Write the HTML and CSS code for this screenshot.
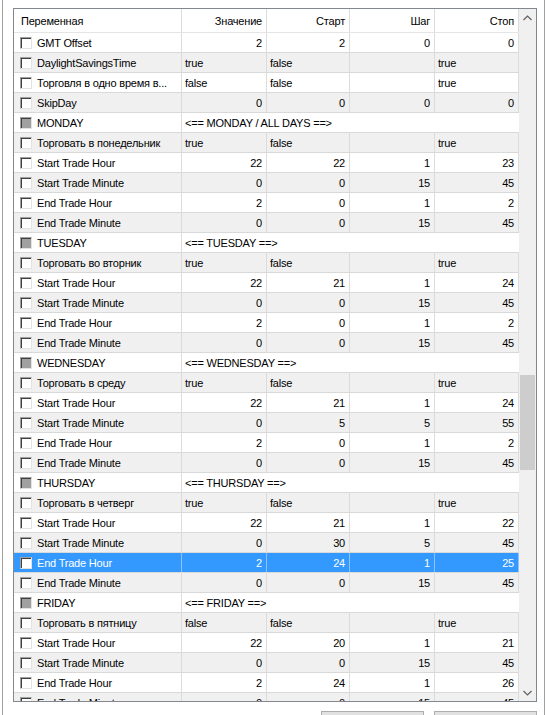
FILE: index.html
```html
<!DOCTYPE html>
<html lang="ru">
<head>
  <meta charset="UTF-8" />
  <title>Входные параметры</title>
  <link rel="stylesheet" href="styles.css">
</head>
<body>

  <div class="panel">
    <div class="list">
      <div class="grid">

        <div class="row head">
          <div class="cell">Переменная</div>
          <div class="cell num">Значение</div>
          <div class="cell num">Старт</div>
          <div class="cell num">Шаг</div>
          <div class="cell num">Стоп</div>
        </div>

        <div class="row">
          <div class="cell name"><span class="cb"></span>GMT Offset</div>
          <div class="cell num">2</div><div class="cell num">2</div><div class="cell num">0</div><div class="cell num">0</div>
        </div>
        <div class="row alt">
          <div class="cell name"><span class="cb"></span>DaylightSavingsTime</div>
          <div class="cell">true</div><div class="cell">false</div><div class="cell"></div><div class="cell">true</div>
        </div>
        <div class="row">
          <div class="cell name"><span class="cb"></span>Торговля в одно время в...</div>
          <div class="cell">false</div><div class="cell">false</div><div class="cell"></div><div class="cell">true</div>
        </div>
        <div class="row alt">
          <div class="cell name"><span class="cb"></span>SkipDay</div>
          <div class="cell num">0</div><div class="cell num">0</div><div class="cell num">0</div><div class="cell num">0</div>
        </div>

        <!-- MONDAY -->
        <div class="row group">
          <div class="cell name"><span class="cb off"></span>MONDAY</div>
          <div class="cell span">&lt;== MONDAY / ALL DAYS ==&gt;</div>
        </div>
        <div class="row alt">
          <div class="cell name"><span class="cb"></span>Торговать в понедельник</div>
          <div class="cell">true</div><div class="cell">false</div><div class="cell"></div><div class="cell">true</div>
        </div>
        <div class="row">
          <div class="cell name"><span class="cb"></span>Start Trade Hour</div>
          <div class="cell num">22</div><div class="cell num">22</div><div class="cell num">1</div><div class="cell num">23</div>
        </div>
        <div class="row alt">
          <div class="cell name"><span class="cb"></span>Start Trade Minute</div>
          <div class="cell num">0</div><div class="cell num">0</div><div class="cell num">15</div><div class="cell num">45</div>
        </div>
        <div class="row">
          <div class="cell name"><span class="cb"></span>End Trade Hour</div>
          <div class="cell num">2</div><div class="cell num">0</div><div class="cell num">1</div><div class="cell num">2</div>
        </div>
        <div class="row alt">
          <div class="cell name"><span class="cb"></span>End Trade Minute</div>
          <div class="cell num">0</div><div class="cell num">0</div><div class="cell num">15</div><div class="cell num">45</div>
        </div>

        <!-- TUESDAY -->
        <div class="row group">
          <div class="cell name"><span class="cb off"></span>TUESDAY</div>
          <div class="cell span">&lt;== TUESDAY ==&gt;</div>
        </div>
        <div class="row alt">
          <div class="cell name"><span class="cb"></span>Торговать во вторник</div>
          <div class="cell">true</div><div class="cell">false</div><div class="cell"></div><div class="cell">true</div>
        </div>
        <div class="row">
          <div class="cell name"><span class="cb"></span>Start Trade Hour</div>
          <div class="cell num">22</div><div class="cell num">21</div><div class="cell num">1</div><div class="cell num">24</div>
        </div>
        <div class="row alt">
          <div class="cell name"><span class="cb"></span>Start Trade Minute</div>
          <div class="cell num">0</div><div class="cell num">0</div><div class="cell num">15</div><div class="cell num">45</div>
        </div>
        <div class="row">
          <div class="cell name"><span class="cb"></span>End Trade Hour</div>
          <div class="cell num">2</div><div class="cell num">0</div><div class="cell num">1</div><div class="cell num">2</div>
        </div>
        <div class="row alt">
          <div class="cell name"><span class="cb"></span>End Trade Minute</div>
          <div class="cell num">0</div><div class="cell num">0</div><div class="cell num">15</div><div class="cell num">45</div>
        </div>

        <!-- WEDNESDAY -->
        <div class="row group">
          <div class="cell name"><span class="cb off"></span>WEDNESDAY</div>
          <div class="cell span">&lt;== WEDNESDAY ==&gt;</div>
        </div>
        <div class="row alt">
          <div class="cell name"><span class="cb"></span>Торговать в среду</div>
          <div class="cell">true</div><div class="cell">false</div><div class="cell"></div><div class="cell">true</div>
        </div>
        <div class="row">
          <div class="cell name"><span class="cb"></span>Start Trade Hour</div>
          <div class="cell num">22</div><div class="cell num">21</div><div class="cell num">1</div><div class="cell num">24</div>
        </div>
        <div class="row alt">
          <div class="cell name"><span class="cb"></span>Start Trade Minute</div>
          <div class="cell num">0</div><div class="cell num">5</div><div class="cell num">5</div><div class="cell num">55</div>
        </div>
        <div class="row">
          <div class="cell name"><span class="cb"></span>End Trade Hour</div>
          <div class="cell num">2</div><div class="cell num">0</div><div class="cell num">1</div><div class="cell num">2</div>
        </div>
        <div class="row alt">
          <div class="cell name"><span class="cb"></span>End Trade Minute</div>
          <div class="cell num">0</div><div class="cell num">0</div><div class="cell num">15</div><div class="cell num">45</div>
        </div>

        <!-- THURSDAY -->
        <div class="row group">
          <div class="cell name"><span class="cb off"></span>THURSDAY</div>
          <div class="cell span">&lt;== THURSDAY ==&gt;</div>
        </div>
        <div class="row alt">
          <div class="cell name"><span class="cb"></span>Торговать в четверг</div>
          <div class="cell">true</div><div class="cell">false</div><div class="cell"></div><div class="cell">true</div>
        </div>
        <div class="row">
          <div class="cell name"><span class="cb"></span>Start Trade Hour</div>
          <div class="cell num">22</div><div class="cell num">21</div><div class="cell num">1</div><div class="cell num">22</div>
        </div>
        <div class="row alt">
          <div class="cell name"><span class="cb"></span>Start Trade Minute</div>
          <div class="cell num">0</div><div class="cell num">30</div><div class="cell num">5</div><div class="cell num">45</div>
        </div>
        <div class="row selected">
          <div class="cell name"><span class="cb"></span>End Trade Hour</div>
          <div class="cell num">2</div><div class="cell num">24</div><div class="cell num">1</div><div class="cell num">25</div>
        </div>
        <div class="row alt">
          <div class="cell name"><span class="cb"></span>End Trade Minute</div>
          <div class="cell num">0</div><div class="cell num">0</div><div class="cell num">15</div><div class="cell num">45</div>
        </div>

        <!-- FRIDAY -->
        <div class="row group">
          <div class="cell name"><span class="cb off"></span>FRIDAY</div>
          <div class="cell span">&lt;== FRIDAY ==&gt;</div>
        </div>
        <div class="row alt">
          <div class="cell name"><span class="cb"></span>Торговать в пятницу</div>
          <div class="cell">false</div><div class="cell">false</div><div class="cell"></div><div class="cell">true</div>
        </div>
        <div class="row">
          <div class="cell name"><span class="cb"></span>Start Trade Hour</div>
          <div class="cell num">22</div><div class="cell num">20</div><div class="cell num">1</div><div class="cell num">21</div>
        </div>
        <div class="row alt">
          <div class="cell name"><span class="cb"></span>Start Trade Minute</div>
          <div class="cell num">0</div><div class="cell num">0</div><div class="cell num">15</div><div class="cell num">45</div>
        </div>
        <div class="row">
          <div class="cell name"><span class="cb"></span>End Trade Hour</div>
          <div class="cell num">2</div><div class="cell num">24</div><div class="cell num">1</div><div class="cell num">26</div>
        </div>
        <div class="row alt">
          <div class="cell name"><span class="cb"></span>End Trade Minute</div>
          <div class="cell num">0</div><div class="cell num">0</div><div class="cell num">15</div><div class="cell num">45</div>
        </div>

      </div>

      <div class="scrollbar">
        <div class="arrow">
          <svg width="9" height="6" viewBox="0 0 9 6"><polyline points="0.5,5 4.5,1 8.5,5" fill="none" stroke="#606060" stroke-width="1.2"/></svg>
        </div>
        <div class="track"><div class="thumb"></div></div>
        <div class="arrow">
          <svg width="9" height="6" viewBox="0 0 9 6"><polyline points="0.5,1 4.5,5 8.5,1" fill="none" stroke="#606060" stroke-width="1.2"/></svg>
        </div>
      </div>
    </div>

    <div class="buttons">
      <button class="btn"></button>
      <button class="btn"></button>
    </div>
  </div>

</body>
</html>
```

FILE: styles.css
```css
body {
  margin: 0;
  background: #fff;
  font-family: 'Liberation Sans', Arial, sans-serif;
  font-size: 11px;
  letter-spacing: -0.2px;
  color: #000;
  overflow: hidden;
}
.panel {
  margin-left: 2px;
  width: 543px;
  height: 715px;
  box-sizing: border-box;
  border-left: 1px solid #a0a0a0;
  border-right: 1px solid #a0a0a0;
  padding: 8px 0 0 10px;
}
.list {
  width: 524px;
  height: 694px;
  box-sizing: border-box;
  border: 1px solid #828790;
  display: flex;
  background: #fff;
}
.grid { width: 505px; overflow: hidden; }

/* one line of the inputs table */
.row {
  display: grid;
  grid-template-columns: 168px 85px 83px 85px 84px;
  height: 20px;
  box-sizing: border-box;
  border-bottom: 1px solid #d9d9d9;
  background: #fff;
}
.row.alt { background: #f0f0f0; }
.row.head {
  height: 24px;
  border-bottom: 1px solid #e5e5e5;
}
.row.head .cell { line-height: 23px; padding-left: 7px; }
.row.head .cell.num { padding-left: 0; }
.cell {
  border-right: 1px solid #dcdcdc;
  line-height: 19px;
  padding: 1px 4px 0 3px;
  white-space: nowrap;
  overflow: hidden;
}
.cell.num { text-align: right; }
.cell.name {
  display: flex;
  align-items: center;
  padding-left: 6px;
}
.cell.span { grid-column: 2 / 6; border-right: none; }

.row.selected { background: #3399ff; color: #fff; }
.row.selected .cell { border-right-color: #8cc3ff; }

/* 3D checkbox of the old list view */
.cb {
  width: 12px;
  height: 12px;
  box-sizing: border-box;
  border-top: 1px solid #a0a0a0;
  border-left: 1px solid #a0a0a0;
  border-right: 1px solid #e3e3e3;
  border-bottom: 1px solid #e3e3e3;
  box-shadow: inset 1px 1px 0 #404040;
  background: #fff;
  margin: 0 5px 1px 0;
  flex: none;
}
.cb.off { background: #a0a0a0; }

.scrollbar {
  width: 17px;
  background: #f0f0f0;
  display: flex;
  flex-direction: column;
}
.arrow {
  height: 17px;
  display: flex;
  align-items: center;
  justify-content: center;
}
.track { flex: 1; position: relative; }
.thumb {
  position: absolute;
  left: 1px;
  right: 1px;
  top: 349px;
  height: 95px;
  background: #cdcdcd;
}

.buttons {
  display: flex;
  gap: 10px;
  justify-content: flex-end;
  width: 524px;
  margin-top: 9px;
}
.btn {
  width: 103px;
  height: 24px;
  border: 1px solid #adadad;
  background: #e1e1e1;
  padding: 0;
}
```
